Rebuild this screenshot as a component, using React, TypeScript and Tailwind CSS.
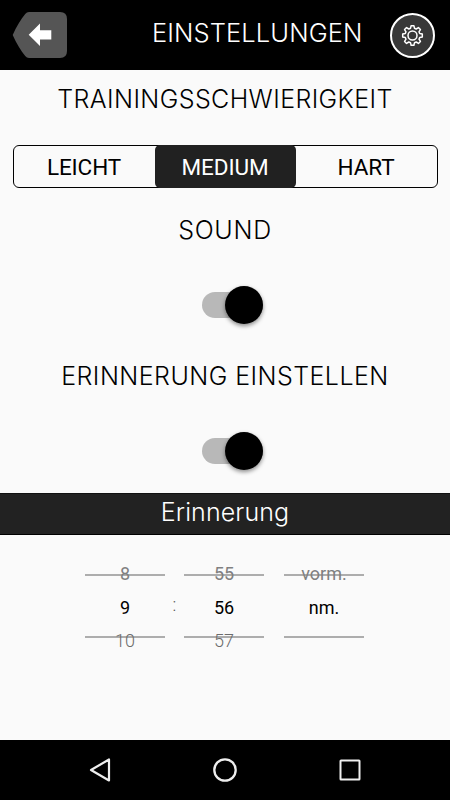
import React, { useState } from 'react';

const LEVELS = ['LEICHT', 'MEDIUM', 'HART'];

const COLUMNS = [
  { prev: '8', value: '9', next: '10' },
  { prev: '55', value: '56', next: '57' },
  { prev: 'vorm.', value: 'nm.', next: '' },
];

const Header: React.FC = () => (
  <header className="flex h-[70px] items-center bg-black pr-[15px] pl-3">
    <button aria-label="Zurück">
      <svg className="block h-[46px] w-[55px]" viewBox="0 0 55 46">
        <path
          d="M.7 23C4.500 14.500 9 7 13.200 2Q14.800 0 17 0H48Q55 0 55 7V39Q55 46 48 46H17Q14.800 46 13.200 44C9 39 4.500 31.500 .7 23Z"
          fill="#555"
        />
        <path d="M16.700 22.800L28 11.500V18.200H39.300V27.500H28V34.100Z" fill="#fff" />
      </svg>
    </button>
    <h1 className="ml-[85px] flex-1 pb-[5px] text-[25.500px] leading-[60px] font-light tracking-[0.1px] whitespace-nowrap text-white">
      EINSTELLUNGEN
    </h1>
    <button aria-label="Optionen">
      <svg className="block size-[45px]" viewBox="-22.5 -22.5 45 45" fill="none" stroke="#fff">
        <circle r="21.500" fill="#383838" strokeWidth="2" />
        <circle r="4.500" strokeWidth="1.500" />
        <path
          strokeWidth="1.500"
          strokeLinejoin="round"
          d="M-1.400 -9.800H1.400L2 -7.200L3.680 -6.500L5.940 -7.920L7.920 -5.940L6.500 -3.680L7.200 -2L9.800 -1.400V1.400L7.200 2L6.500 3.680L7.920 5.940L5.940 7.920L3.680 6.500L2 7.200L1.400 9.800H-1.400L-2 7.200L-3.680 6.500L-5.940 7.920L-7.920 5.940L-6.500 3.680L-7.200 2L-9.800 1.400V-1.400L-7.200 -2L-6.500 -3.680L-7.920 -5.940L-5.940 -7.920L-3.680 -6.500L-2 -7.200Z"
        />
      </svg>
    </button>
  </header>
);

const Toggle: React.FC<{ label: string }> = ({ label }) => {
  const [on, setOn] = useState(true);

  return (
    <button
      role="switch"
      aria-checked={on}
      aria-label={label}
      onClick={() => setOn(!on)}
      className={`mx-auto flex h-[26px] w-[61px] items-center rounded-full bg-[#b8b8b8] ${
        on ? 'justify-end' : 'justify-start'
      }`}
    >
      <span className="size-[38px] shrink-0 rounded-full bg-black shadow-[0_2px_4px_rgba(0,0,0,0.45)]" />
    </button>
  );
};

const TimePicker: React.FC = () => (
  <div className="flex justify-center pt-[22px] pr-px font-['Roboto',sans-serif] text-[18px] text-black">
    {COLUMNS.map((col, i) => (
      <React.Fragment key={col.value}>
        {i === 1 && (
          <span className="w-[19px] pt-[38px] text-center leading-[20px] font-light text-[#555]">:</span>
        )}
        <div className={`w-20 text-center ${i === 2 ? 'ml-5' : ''}`}>
          <div className="relative h-[34px] leading-[34px] text-[#808080]">
            <span className="absolute inset-x-0 top-[17px] h-[2px] bg-[#adadad]" />
            <span className="relative">{col.prev}</span>
          </div>
          <div className="h-[33px] leading-[33px]">{col.value}</div>
          <div className="relative h-[34px] leading-[34px] font-light text-[#6c6c6c]">
            <span className="absolute inset-x-0 top-[12px] h-[2px] bg-[#adadad]" />
            <span className="relative">{col.next}</span>
          </div>
        </div>
      </React.Fragment>
    ))}
  </div>
);

const NavBar: React.FC = () => (
  <nav className="flex h-[60px] items-center justify-between bg-black px-[88px]">
    <svg className="size-6" viewBox="0 0 24 24" fill="none" stroke="#eee" strokeWidth="2.200">
      <path d="M21 1.500V22.500L3 12Z" strokeLinejoin="round" />
    </svg>
    <svg className="size-6" viewBox="0 0 24 24" fill="none" stroke="#eee" strokeWidth="2.300">
      <circle cx="12" cy="12" r="10.700" />
    </svg>
    <svg className="size-6" viewBox="0 0 24 24" fill="none" stroke="#eee" strokeWidth="2">
      <rect x="2.500" y="2.500" width="19" height="19" rx=".5" />
    </svg>
  </nav>
);

export default function App() {
  const [level, setLevel] = useState('MEDIUM');

  return (
    <div className="flex h-[800px] w-[450px] flex-col overflow-hidden bg-[#fafafa] font-['Inter',sans-serif] text-black">
      <Header />
      <main className="flex flex-1 flex-col">
        <h2 className="h-[75px] text-center text-[25px] leading-[58px] font-light tracking-[0.4px]">
          TRAININGSSCHWIERIGKEIT
        </h2>
        <div className="mx-[12.500px] flex h-[43px] rounded-[6px] border border-black font-['Roboto',sans-serif] text-[22.500px]">
          {LEVELS.map((name) => (
            <button
              key={name}
              onClick={() => setLevel(name)}
              className={`-my-px flex-1 rounded-[5px] pt-px leading-[42px] tracking-[-0.1px] ${
                name === level ? 'bg-[#212121] text-white' : 'text-black'
              }`}
            >
              {name}
            </button>
          ))}
        </div>
        <h2 className="mt-[13px] h-[91px] text-center text-[25px] leading-[58px] font-light tracking-[0.7px]">
          SOUND
        </h2>
        <div className="pl-[14px]">
          <Toggle label="Sound" />
        </div>
        <h2 className="mt-[29px] h-[91px] text-center text-[25px] leading-[58px] font-light tracking-[0.45px]">
          ERINNERUNG EINSTELLEN
        </h2>
        <div className="pl-[14px]">
          <Toggle label="Erinnerung einstellen" />
        </div>
        <h3 className="mt-[29px] h-[42px] border-t border-b border-t-[#111] border-b-black bg-[#222] text-center text-[25px] leading-[37px] font-light tracking-[0.1px] text-white">
          Erinnerung
        </h3>
        <TimePicker />
      </main>
      <NavBar />
    </div>
  );
}
